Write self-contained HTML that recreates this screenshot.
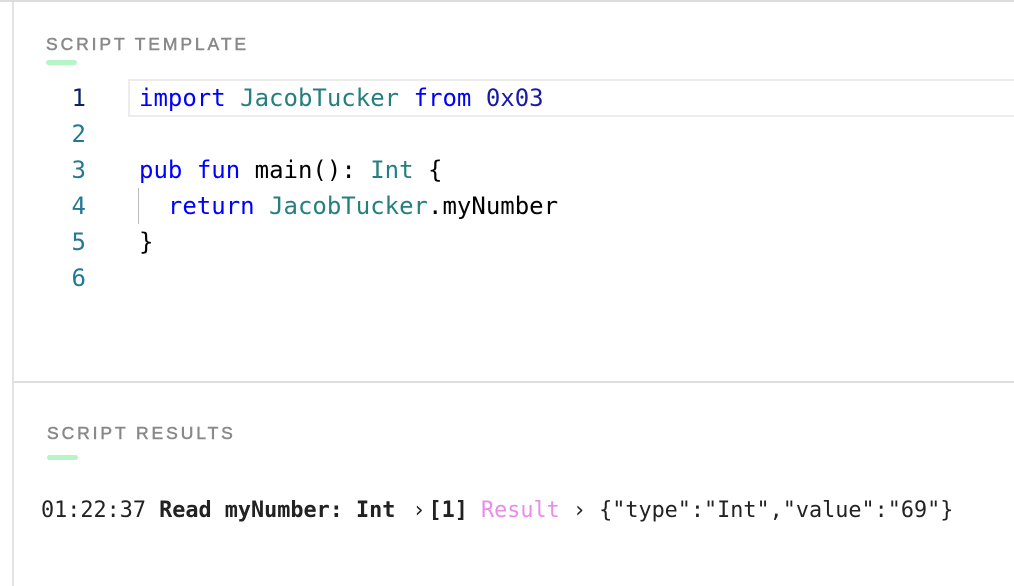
<!DOCTYPE html>
<html><head><style>
html,body{margin:0;padding:0;background:#fff;width:1014px;height:586px;overflow:hidden;position:relative}
.top{position:absolute;left:0;top:0;width:1014px;height:2px;background:#dcdcdc}
.left{position:absolute;left:12px;top:2px;width:2px;height:584px;background:#e3e3e3}
.div{position:absolute;left:14px;top:381px;width:1000px;height:2px;background:#dedede}
.h{position:absolute;font-family:"Liberation Sans",sans-serif;font-size:17.5px;letter-spacing:2.9px;color:#888;-webkit-text-stroke:0.5px #888}
.u{position:absolute;height:5px;border-radius:3px;background:#b5f5c6}
.code{position:absolute;left:0;top:80px;font-family:"DejaVu Sans Mono",monospace;font-size:24px}
.ln{position:absolute;height:36px;line-height:36px;white-space:pre}
.num{width:86px;text-align:right;color:#237893;left:0}
.hl{position:absolute;left:128px;top:79px;width:890px;height:34px;border:2px solid #ececec;border-right:none}
.k{color:#0000ff}.t{color:#267f7f}
.res{position:absolute;left:41px;top:497px;font-family:"DejaVu Sans Mono",monospace;font-size:21.8px;color:#222;white-space:pre;line-height:28px}
</style></head><body>
<div class="top"></div><div class="left"></div><div class="div"></div>
<div class="h" style="left:46px;top:34px">SCRIPT TEMPLATE</div>
<div class="u" style="left:46px;top:60px;width:31px"></div>
<div class="hl"></div>
<div style="position:absolute;left:138px;top:188px;width:1px;height:36px;background:#bbb"></div>
<div class="code">
<div class="ln num" style="top:0;color:#0b216f">1</div>
<div class="ln num" style="top:36px">2</div>
<div class="ln num" style="top:72px">3</div>
<div class="ln num" style="top:108px">4</div>
<div class="ln num" style="top:144px">5</div>
<div class="ln num" style="top:180px">6</div>
<div class="ln" style="left:139px;top:0"><span class="k">import</span> <span class="t">JacobTucker</span> <span class="k">from</span> <span style="color:#1a1aa6">0x03</span></div>
<div class="ln" style="left:139px;top:72px"><span class="k">pub</span> <span class="k">fun</span> main(): <span class="t">Int</span> {</div>
<div class="ln" style="left:139px;top:108px">  <span class="k">return</span> <span class="t">JacobTucker</span>.myNumber</div>
<div class="ln" style="left:139px;top:144px">}</div>
</div>
<div class="h" style="left:47px;top:423px">SCRIPT RESULTS</div>
<div class="u" style="left:47px;top:455px;width:31px"></div>
<div class="res">01:22:37 <b>Read myNumber: Int</b><span style="margin-left:17px">›</span><b style="margin-left:3px">[1]</b> <span style="color:#e98ce9">Result</span> › {"type":"Int","value":"69"}</div>
</body></html>
